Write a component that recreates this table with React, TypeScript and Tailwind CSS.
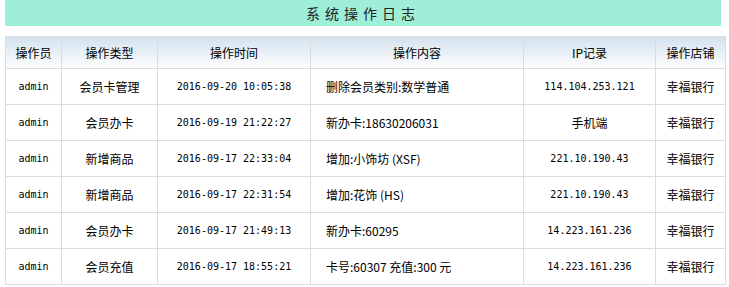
const rows = [
  { user: "admin", type: "会员卡管理", time: "2016-09-20 10:05:38", content: "删除会员类别:数学普通", ip: "114.104.253.121", shop: "幸福银行" },
  { user: "admin", type: "会员办卡", time: "2016-09-19 21:22:27", content: "新办卡:18630206031", ip: "手机端", shop: "幸福银行" },
  { user: "admin", type: "新增商品", time: "2016-09-17 22:33:04", content: "增加:小饰坊 (XSF)", ip: "221.10.190.43", shop: "幸福银行" },
  { user: "admin", type: "新增商品", time: "2016-09-17 22:31:54", content: "增加:花饰 (HS)", ip: "221.10.190.43", shop: "幸福银行" },
  { user: "admin", type: "会员办卡", time: "2016-09-17 21:49:13", content: "新办卡:60295", ip: "14.223.161.236", shop: "幸福银行" },
  { user: "admin", type: "会员充值", time: "2016-09-17 18:55:21", content: "卡号:60307 充值:300 元", ip: "14.223.161.236", shop: "幸福银行" },
];

const heads = ["操作员", "操作类型", "操作时间", "操作内容", "IP记录", "操作店铺"];
const widths = ["w-[56px]", "w-[96px]", "w-[153px]", "w-[213px]", "w-[132px]", "w-[70px]"];

const mono = "font-['DejaVu_Sans_Mono',monospace] text-[10px]";
const cell = "border border-[#dcdcdc] text-center";

export default function App() {
  return (
    <div className="min-h-[287px] bg-white pl-[5px] font-['Noto_Sans_CJK_SC',sans-serif] text-[12px] text-black">
      <div className="flex h-[26px] w-[716px] items-center justify-center bg-[#9eeed8] text-[14px] tracking-[5px] text-[#222]">
        系统操作日志
      </div>

      <table className="mt-[10px] w-[720px] table-fixed border-collapse border border-[#dcdcdc]">
        <thead>
          <tr className="h-[32px] bg-gradient-to-b from-[#d3e2ef] to-white">
            {heads.map((h, i) => (
              <th key={h} className={`${cell} ${widths[i]} font-normal`}>
                {h}
              </th>
            ))}
          </tr>
        </thead>
        <tbody>
          {rows.map((r, i) => (
            <tr key={i} className="h-[36px]">
              <td className={`${cell} ${mono}`}>{r.user}</td>
              <td className={cell}>{r.type}</td>
              <td className={`${cell} ${mono}`}>{r.time}</td>
              <td className="border border-[#dcdcdc] pl-[15px] text-left">{r.content}</td>
              <td className={`${cell} ${r.ip === "手机端" ? "" : mono}`}>{r.ip}</td>
              <td className={cell}>{r.shop}</td>
            </tr>
          ))}
        </tbody>
      </table>
    </div>
  );
}
